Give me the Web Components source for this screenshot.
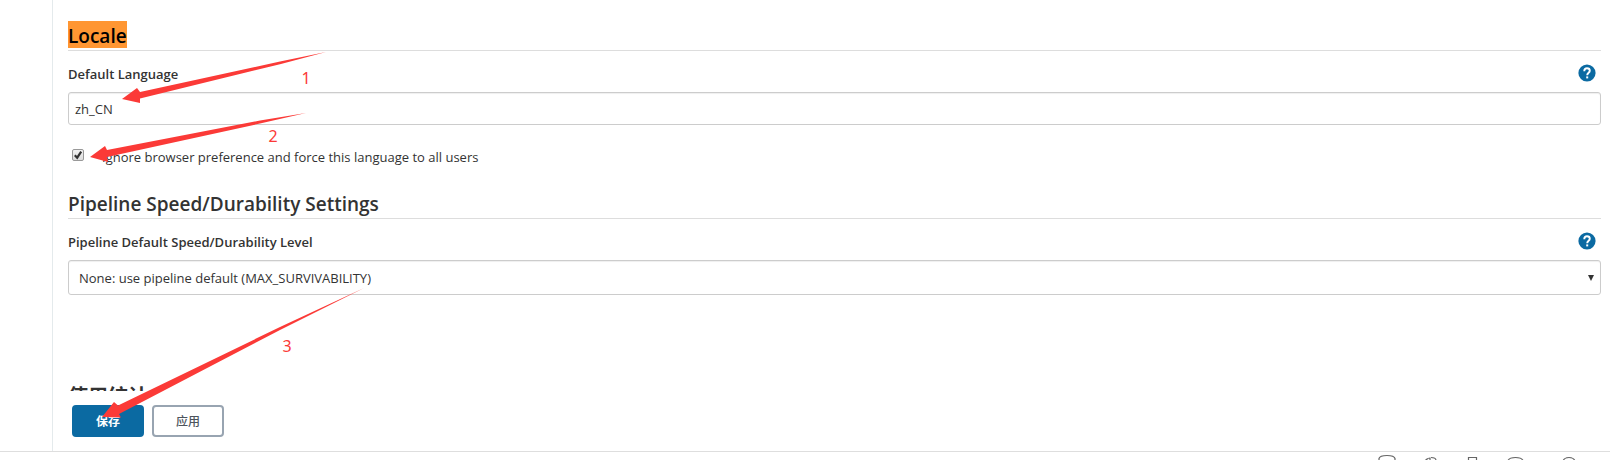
<!DOCTYPE html>
<html lang="zh-CN">
<head>
<meta charset="utf-8">
<title>Configure System</title>
<style>
  html, body { height: 100%; margin: 0; }
  body { background: #fff; color: #333; font: 14px/20px "Open Sans", "Noto Sans CJK SC", sans-serif; overflow: hidden; }
</style>
</head>
<body>
<settings-page>
  <settings-section heading="Locale" marked>
    <text-setting label="Default Language" value="zh_CN"></text-setting>
    <check-setting>Ignore browser preference and force this language to all users</check-setting>
  </settings-section>
  <settings-section heading="Pipeline Speed/Durability Settings">
    <select-setting label="Pipeline Default Speed/Durability Level">None: use pipeline default (MAX_SURVIVABILITY)</select-setting>
  </settings-section>
  <settings-section class="last" heading="使用统计" bold></settings-section>
  <action-bar slot="actions"></action-bar>
  <status-strip slot="footer"></status-strip>
  <arrow-notes slot="notes"></arrow-notes>
</settings-page>
<script>
class BaseElement extends HTMLElement {
  connectedCallback() {
    if (this.shadowRoot) return;
    this.attachShadow({ mode: 'open' }).innerHTML = this.render();
  }
}

customElements.define('settings-page', class extends BaseElement {
  render() {
    return `<style>
      :host { display: flex; flex-direction: column; height: 100vh; position: relative; }
      .row { flex: 1; min-height: 0; display: flex; }
      aside { width: 52px; border-right: 1px solid #e4eaec; }
      main { flex: 1; min-width: 0; display: flex; flex-direction: column; }
      .scroll { flex: 1; min-height: 0; overflow: hidden; padding: 21px 9px 0 15px; }
      ::slotted(.last) { margin-top: 86px; }
    </style>
    <div class="row"><aside></aside><main><div class="scroll"><slot></slot></div><slot name="actions"></slot></main></div>
    <slot name="footer"></slot><slot name="notes"></slot>`;
  }
});

customElements.define('settings-section', class extends BaseElement {
  render() {
    return `<style>
      :host { display: block; margin-bottom: 19px; }
      h2 { margin: 0; padding: 4px 0 2px; border-bottom: 1px solid #ddd; font-size: 19px; line-height: 23px; font-weight: 600; color: #333; }
      :host([bold]) h2 { font-weight: 700; font-size: 20px; }
      :host([marked]) h2 { padding-top: 0; }
      mark { display: block; width: fit-content; padding-top: 4px; background: #ff9632; color: #000; }
    </style>
    <h2>${this.hasAttribute('marked') ? `<mark>${this.getAttribute('heading')}</mark>` : this.getAttribute('heading')}</h2><slot></slot>`;
  }
});

const fieldStyle = `
  :host { display: block; }
  .head { display: flex; justify-content: space-between; align-items: flex-start; padding: 13px 5px 8px 0; }
  label { font-size: 13px; line-height: 20px; font-weight: 600; color: #333; }`;

customElements.define('help-button', class extends BaseElement {
  render() {
    return `<style>
      :host { display: block; }
      button { display: block; width: 18px; height: 18px; padding: 0; border: 0; background: none; }
      svg { display: block; }
    </style>
    <button type="button" aria-label="Help"><svg width="18" height="18" viewBox="0 0 18 18"><circle cx="9" cy="9" r="8.600" fill="#0b6aa2"/><path d="M6.300 7.200V6.800A2.700 2.700 0 0 1 9 4.200c1.700 0 2.800 1.100 2.800 2.500 0 2-2.600 2.100-2.600 4.500" fill="none" stroke="#fff" stroke-width="1.900"/><path d="M8.200 12.400h2v2h-2z" fill="#fff"/></svg></button>`;
  }
});

customElements.define('text-setting', class extends BaseElement {
  render() {
    return `<style>${fieldStyle}
      input { display: block; box-sizing: border-box; width: 100%; height: 33px; padding: 0 6px; border: 1px solid #ccc; border-radius: 3px; font: inherit; font-size: 13px; color: #333; box-shadow: inset 0 1px 1px #0001; outline: 0; }
    </style>
    <div class="head"><label for="f">${this.getAttribute('label')}</label><help-button></help-button></div>
    <input id="f" type="text" value="${this.getAttribute('value')}">`;
  }
});

customElements.define('check-setting', class extends BaseElement {
  render() {
    return `<style>
      :host { display: block; padding: 22px 0 3px 4px; }
      div { display: flex; align-items: center; gap: 18px; }
      label { font-size: 13px; line-height: 20px; }
      input { appearance: none; width: 12px; height: 12px; margin: 0 0 4px; border: 1px solid #999; border-radius: 2px; box-sizing: border-box; display: grid;
        background: linear-gradient(#f2f2f2, #dcdcdc); }
      .box { display: grid; }
      .box > * { grid-area: 1 / 1; }
      svg { pointer-events: none; }
    </style>
    <div><span class="box"><input id="c" type="checkbox" checked><svg width="12" height="12" viewBox="0 0 12 12"><path d="M2.800 6.200l2.400 2.500 4-6" fill="none" stroke="#333" stroke-width="2.200"/></svg></span><label for="c"><slot></slot></label></div>`;
  }
});

customElements.define('select-setting', class extends BaseElement {
  render() {
    return `<style>${fieldStyle}
      .wrap { display: grid; align-items: center; }
      .wrap > * { grid-area: 1 / 1; }
      select { appearance: none; box-sizing: border-box; width: 100%; height: 35px; padding: 0 24px 0 10px; border: 1px solid #ccc; border-radius: 3px; background: #fff; color: #333; font: inherit; font-size: 13px; box-shadow: inset 0 1px 1px #0001; }
      svg { justify-self: end; margin-right: 7px; pointer-events: none; }
    </style>
    <div class="head"><label for="s">${this.getAttribute('label')}</label><help-button></help-button></div>
    <div class="wrap"><select id="s"><option>${this.textContent}</option></select><svg width="6" height="6" viewBox="0 0 6 6"><path d="M0 0h6L3 6z" fill="#333"/></svg></div>`;
  }
});

customElements.define('action-bar', class extends BaseElement {
  render() {
    return `<style>
      :host { display: flex; gap: 8px; padding: 14px 19px; background: #fff; }
      button { width: 72px; height: 32px; padding: 0; border: 2px solid #98a4b1; border-radius: 4px; background: #fff; color: #4d545d; font: 500 12px/18px "Noto Sans CJK SC", sans-serif; }
      .primary { background: #0b6aa2; border-color: #0b6aa2; color: #fff; font-weight: 700; }
    </style>
    <button type="submit" class="primary">保存</button><button type="button">应用</button>`;
  }
});

customElements.define('status-strip', class extends BaseElement {
  render() {
    return `<style>
      :host { display: flex; justify-content: flex-end; height: 8px; border-top: 1px solid #dedede; padding-right: 33px; overflow: hidden; }
      svg { flex: none; }
    </style>
    <svg width="200" height="20" viewBox="0 0 200 20" fill="none" stroke="#666" stroke-width="1.200">
      <path d="M2 16V6.500c1-4 15-4 16 0V16"/>
      <path d="M48 9c1-2 3-3 5-3v6M54 5.500c3 0 5 1 5 3M50 7v6"/>
      <path d="M91.500 16V5.500h8V16"/>
      <path d="M131 8.500c2-4 13-4 15 0v8h-15z"/>
      <path d="M186 10c0-6 12-6 12 0v6h-12z"/>
    </svg>`;
  }
});

customElements.define('arrow-notes', class extends BaseElement {
  render() {
    return `<style>
      :host { position: absolute; top: 0; left: 0; pointer-events: none; }
      svg { display: block; }
      text { font: 16px "Noto Sans", sans-serif; text-anchor: middle; }
    </style>
    <svg width="400" height="440" viewBox="0 0 400 440" fill="#fb3a37">
      <path d="M122 99l15-11 3 4L280 61.500 326 52l-46 12.200L140 98.500v4.500z"/>
      <path d="M90 157l15-11 2 4 153-29.500 46-7.500-46 10.500L107 157l1 5z"/>
      <path d="M102 417l12-15 4 3.500L280 327l84-39-84 42L119 414l2 3.500z"/>
      <text x="306" y="84">1</text><text x="273" y="142">2</text><text x="287" y="352">3</text>
    </svg>`;
  }
});
</script>
</body>
</html>
